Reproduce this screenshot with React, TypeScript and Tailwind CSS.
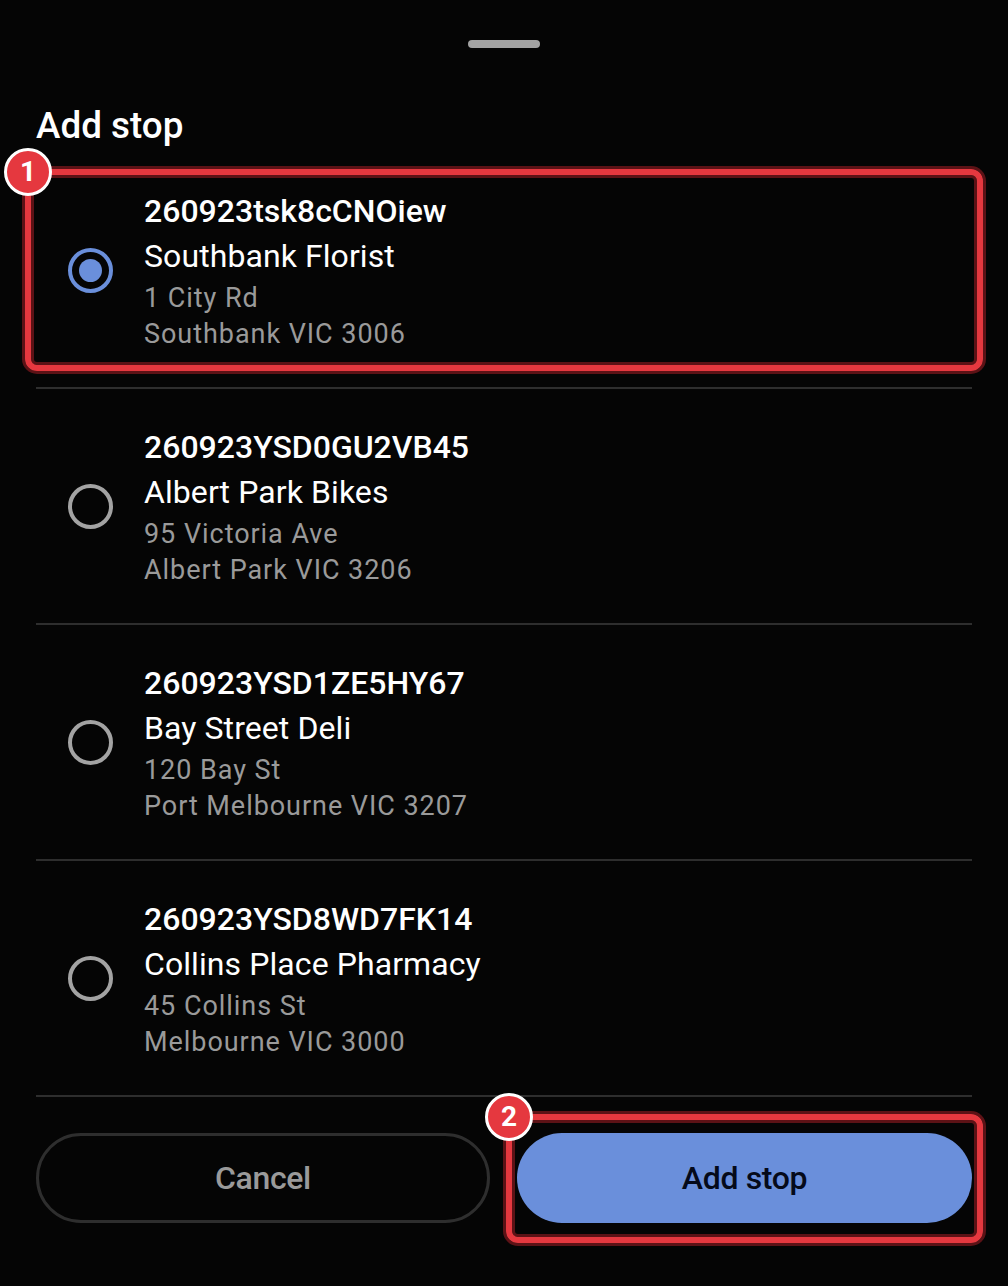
const stops = [
  { id: '260923tsk8cCNOiew', name: 'Southbank Florist', street: '1 City Rd', city: 'Southbank VIC 3006', selected: true },
  { id: '260923YSD0GU2VB45', name: 'Albert Park Bikes', street: '95 Victoria Ave', city: 'Albert Park VIC 3206', selected: false },
  { id: '260923YSD1ZE5HY67', name: 'Bay Street Deli', street: '120 Bay St', city: 'Port Melbourne VIC 3207', selected: false },
  { id: '260923YSD8WD7FK14', name: 'Collins Place Pharmacy', street: '45 Collins St', city: 'Melbourne VIC 3000', selected: false },
];

function Callout({ n, className }: { n: number; className: string }) {
  return (
    <div className={`absolute ${className} rounded-[12px] border-[6px] border-[#e5383f] shadow-[0_0_0_3px_#5c1216,inset_0_0_0_3px_#5c1216]`}>
      <div className="absolute left-[-27px] top-[-27px] w-12 h-12 rounded-full bg-[#e5383f] border-[3px] border-white flex items-center justify-center text-white text-[28px] font-bold">
        {n}
      </div>
    </div>
  );
}

function Radio({ selected }: { selected: boolean }) {
  if (selected) {
    return (
      <div className="w-[45px] h-[45px] rounded-full border-[4px] border-[#6a8fdb] flex items-center justify-center">
        <div className="w-[23px] h-[23px] rounded-full bg-[#6a8fdb]" />
      </div>
    );
  }
  return <div className="w-[45px] h-[45px] rounded-full border-[4px] border-[#a3a3a3]" />;
}

export default function App() {
  return (
    <div className="w-[1008px] h-[1286px] bg-[#050505] font-['Roboto',sans-serif] overflow-hidden">
      <div className="flex justify-center pt-10">
        <div className="w-[72px] h-2 rounded-full bg-[#a3a3a3]" />
      </div>

      <div className="px-9">
        <h1 className="mt-[56px] h-[49px] text-[36.8px] leading-[44px] font-medium text-white">Add stop</h1>

        <div>
          {stops.map((s, i) => (
            <div key={s.id} className="relative h-[236px] border-b-2 border-[#2e2e2e] flex items-center">
              <div className="w-[108px] pl-[32px] shrink-0">
                <Radio selected={s.selected} />
              </div>
              <div>
                <div className="text-[32px] leading-[45px] font-medium text-white">{s.id}</div>
                <div className="text-[32px] leading-[45px] mb-px tracking-[0.08px] text-white">{s.name}</div>
                <div className="text-[27px] leading-[36px] tracking-[0.95px] text-[#9a9a9a]">{s.street}</div>
                <div className="text-[27px] leading-[36px] tracking-[0.95px] text-[#9a9a9a]">{s.city}</div>
              </div>
              {i === 0 && <Callout n={1} className="left-[-11px] right-[-11px] top-[16px] bottom-[16px]" />}
            </div>
          ))}
        </div>

        <div className="mt-[36px] flex gap-[27px]">
          <button className="w-[454px] shrink-0 h-[90px] rounded-full border-[3px] border-[#2e2e2e] text-[32px] font-medium tracking-[-0.35px] text-[#9a9a9a]">
            Cancel
          </button>
          <div className="relative flex-1">
            <button className="w-full h-[90px] rounded-full bg-[#6a8fdb] text-[32px] font-medium tracking-[-0.35px] text-[#050a1a]">
              Add stop
            </button>
            <Callout n={2} className="left-[-11px] right-[-11px] top-[-19px] bottom-[-20px]" />
          </div>
        </div>
      </div>
    </div>
  );
}
